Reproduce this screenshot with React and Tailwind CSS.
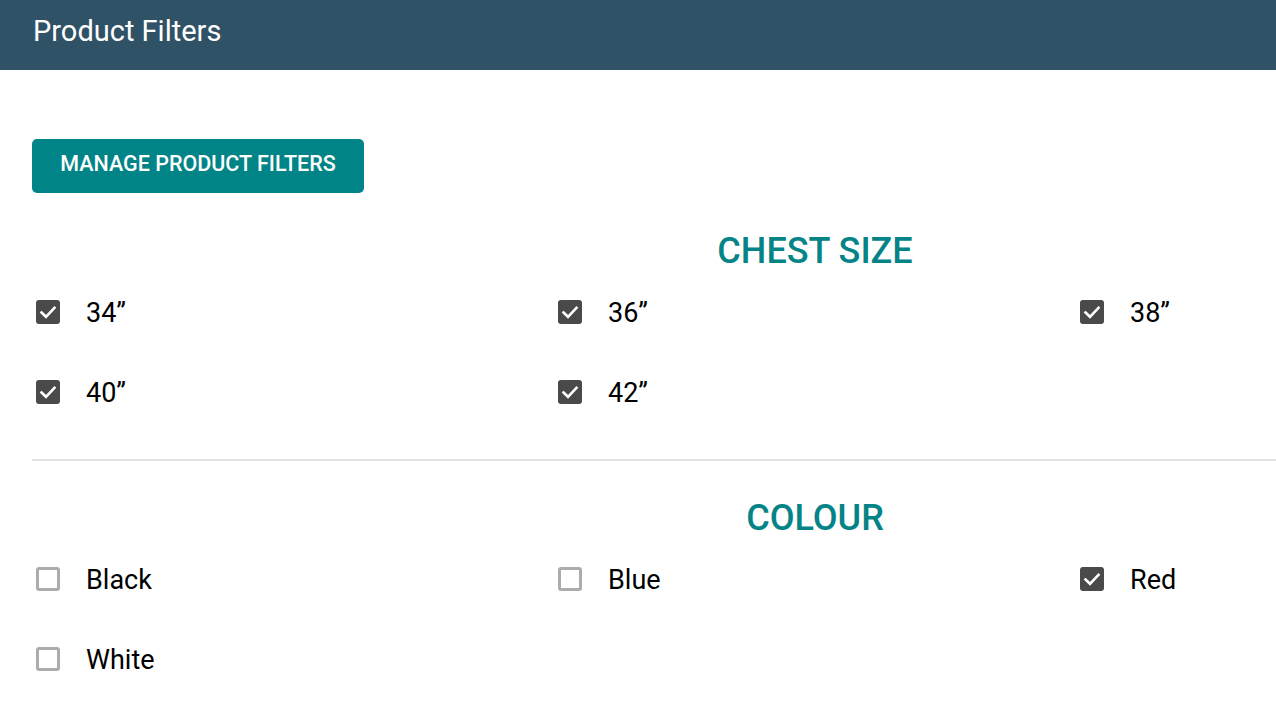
import React from "react";

function Box({ checked }) {
  if (checked) {
    return (
      <div className="w-[24px] h-[24px] rounded-[3px] bg-[#4a4a4a] flex items-center justify-center shrink-0">
        <svg width="24" height="24" viewBox="0 0 24 24">
          <polyline points="5.5,12.5 10,16.8 18.5,7.8" fill="none" stroke="#ffffff" strokeWidth="2.6" strokeLinecap="square" strokeLinejoin="miter" />
        </svg>
      </div>
    );
  }
  return <div className="w-[24px] h-[24px] rounded-[3px] border-[3px] border-[#acacac] bg-white shrink-0" />;
}

function Item({ label, checked }) {
  return (
    <div className="h-[80px] flex items-center pl-[4px]">
      <Box checked={checked} />
      <span className="ml-[26px] pt-[3px] text-[27px] leading-none text-black">{label}</span>
    </div>
  );
}

function Section({ title, items }) {
  return (
    <div>
      <h2 className="text-center text-[36px] leading-none font-medium text-[#058487]">{title}</h2>
      <div className="grid grid-cols-3 mt-[3px]">
        {items.map((it) => (
          <Item key={it.label} label={it.label} checked={it.checked} />
        ))}
      </div>
    </div>
  );
}

export default function App() {
  return (
    <div className="w-[1276px] h-[722px] overflow-hidden bg-white font-['Roboto',sans-serif]">
      <div className="w-[1630px]">
        <header className="h-[70px] bg-[#2f5266] pl-[33px] pt-[17px]">
          <h1 className="text-[29px] leading-none font-normal text-white">Product Filters</h1>
        </header>
        <div className="px-[32px]">
          <button className="mt-[69px] w-[332px] h-[54px] rounded-[5px] bg-[#018487] text-white text-[21.5px] font-medium leading-none flex items-center justify-center pb-[4px]">
            MANAGE PRODUCT FILTERS
          </button>
          <div className="mt-[40px]">
            <Section
              title="CHEST SIZE"
              items={[
                { label: "34”", checked: true },
                { label: "36”", checked: true },
                { label: "38”", checked: true },
                { label: "40”", checked: true },
                { label: "42”", checked: true },
              ]}
            />
          </div>
          <div className="mt-[27px] h-[2px] bg-[#e4e4e4]" />
          <div className="mt-[39px]">
            <Section
              title="COLOUR"
              items={[
                { label: "Black", checked: false },
                { label: "Blue", checked: false },
                { label: "Red", checked: true },
                { label: "White", checked: false },
              ]}
            />
          </div>
        </div>
      </div>
    </div>
  );
}
